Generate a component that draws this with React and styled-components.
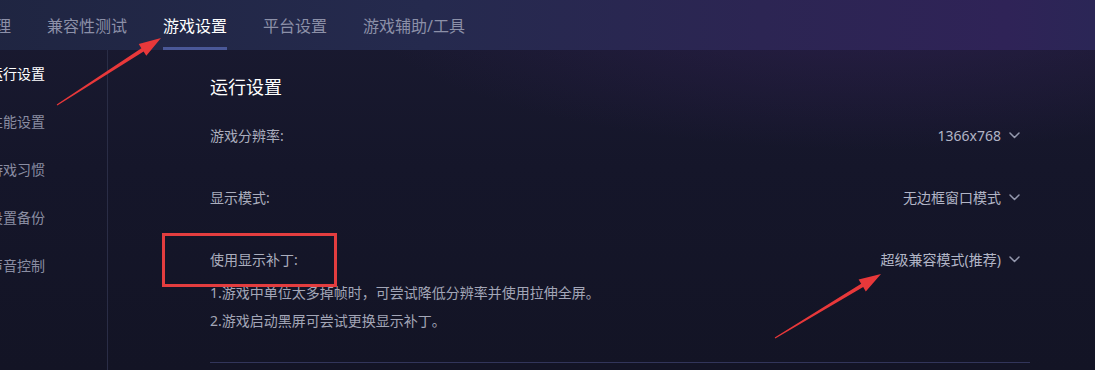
import React from "react";
import styled, { createGlobalStyle } from "styled-components";

const Global = createGlobalStyle`
  html, body { margin: 0; padding: 0; background: #14152a; }
  body { font-family: "Noto Sans", "Noto Sans CJK SC", sans-serif; }
  * { box-sizing: border-box; }
`;

const Page = styled.div`
  position: relative;
  width: 1095px;
  height: 370px;
  overflow: hidden;
  display: flex;
  flex-direction: column;
  background:
    radial-gradient(ellipse 520px 150px at 80% 0%, rgba(60, 36, 100, 0.45), rgba(60, 36, 100, 0) 100%),
    linear-gradient(180deg, #1a1a31 0%, #15162a 45%, #131425 100%);
`;

const TopBar = styled.nav`
  height: 50px;
  flex: none;
  display: flex;
  align-items: stretch;
  gap: 36px;
  margin-left: -21px;
  background: linear-gradient(90deg, #1f2541 0%, #252a4e 40%, #2c2553 70%, #2f2357 92%, #2b2656 100%);
`;

const Tab = styled.div`
  position: relative;
  display: flex;
  align-items: center;
  padding-top: 2px;
  font-size: 16px;
  line-height: 22px;
  white-space: nowrap;
  color: ${(p) => (p.$active ? "#ffffff" : "#8c90a8")};
  &::after {
    content: "";
    display: ${(p) => (p.$active ? "block" : "none")};
    position: absolute;
    left: 0;
    right: 0;
    bottom: 0;
    height: 3px;
    background: #4a5898;
  }
`;

const Body = styled.div`
  flex: 1;
  display: flex;
  min-height: 0;
`;

const Sidebar = styled.aside`
  width: 119px;
  flex: none;
  border-right: 1px solid #2a2d46;
  display: flex;
  flex-direction: column;
  margin-left: -11px;
`;

const SideItem = styled.div`
  height: 48px;
  display: flex;
  align-items: center;
  font-size: 14px;
  line-height: 20px;
  white-space: nowrap;
  color: ${(p) => (p.$active ? "#ffffff" : "#8a8da2")};
`;

const Main = styled.main`
  flex: 1;
  padding: 25px 65px 0 102px;
  display: flex;
  flex-direction: column;
`;

const Heading = styled.h2`
  margin: 0 0 16px;
  font-size: 18px;
  line-height: 24px;
  font-weight: 400;
  color: #ffffff;
`;

const Rows = styled.div`
  display: flex;
  flex-direction: column;
  gap: 22px;
  padding-right: 10px;
`;

const Row = styled.div`
  height: 40px;
  display: flex;
  align-items: center;
  justify-content: space-between;
`;

const Label = styled.span`
  font-size: 14px;
  color: #aaadbd;
`;

const Select = styled.div`
  display: flex;
  align-items: center;
  gap: 8px;
  font-size: 14px;
  color: #b2b5c6;
`;

const Hints = styled.div`
  display: flex;
  flex-direction: column;
`;

const Hint = styled.div`
  font-size: 14px;
  line-height: 28px;
  color: #a3a6b7;
  white-space: nowrap;
`;

const Divider = styled.div`
  margin-top: 27px;
  height: 1px;
  background: #32355a;
`;

const Overlay = styled.svg`
  position: absolute;
  left: 0;
  top: 0;
  pointer-events: none;
`;

const Chevron = () => (
  <svg width="11" height="7" viewBox="0 0 11 7" fill="none">
    <path d="M1 1l4.5 4.5L10 1" stroke="#9498ad" strokeWidth="1.5" strokeLinecap="round" strokeLinejoin="round" />
  </svg>
);

const tabs = ["管理", "兼容性测试", "游戏设置", "平台设置", "游戏辅助/工具"];
const sideItems = ["运行设置", "性能设置", "游戏习惯", "设置备份", "声音控制"];

export default function App() {
  return (
    <>
      <Global />
      <Page>
        <TopBar>
          {tabs.map((t) => (
            <Tab key={t} $active={t === "游戏设置"}>
              {t}
            </Tab>
          ))}
        </TopBar>
        <Body>
          <Sidebar>
            {sideItems.map((s, i) => (
              <SideItem key={s} $active={i === 0}>
                {s}
              </SideItem>
            ))}
          </Sidebar>
          <Main>
            <Heading>运行设置</Heading>
            <Rows>
              <Row>
                <Label>游戏分辨率:</Label>
                <Select>
                  1366x768 <Chevron />
                </Select>
              </Row>
              <Row>
                <Label>显示模式:</Label>
                <Select>
                  无边框窗口模式 <Chevron />
                </Select>
              </Row>
              <div>
                <Row>
                  <Label>使用显示补丁:</Label>
                  <Select>
                    超级兼容模式(推荐) <Chevron />
                  </Select>
                </Row>
                <Hints>
                  <Hint>1.游戏中单位太多掉帧时，可尝试降低分辨率并使用拉伸全屏。</Hint>
                  <Hint>2.游戏启动黑屏可尝试更换显示补丁。</Hint>
                </Hints>
              </div>
            </Rows>
            <Divider />
          </Main>
        </Body>
        <Overlay width="1095" height="370" viewBox="0 0 1095 370">
          <polygon
            fill="#e8383a"
            points="57.3,105.4 143.6,51.6 146.3,55.8 161,38 138.7,44 141.4,48.2 56.7,104.6"
          />
          <rect x="163.5" y="234.5" width="172" height="51" fill="none" stroke="#e33d3f" strokeWidth="3" />
          <polygon
            fill="#e8383a"
            points="775.3,338.4 863.2,287.1 865.8,291.4 881,274 858.6,279.4 861.2,283.7 774.7,337.6"
          />
        </Overlay>
      </Page>
    </>
  );
}
